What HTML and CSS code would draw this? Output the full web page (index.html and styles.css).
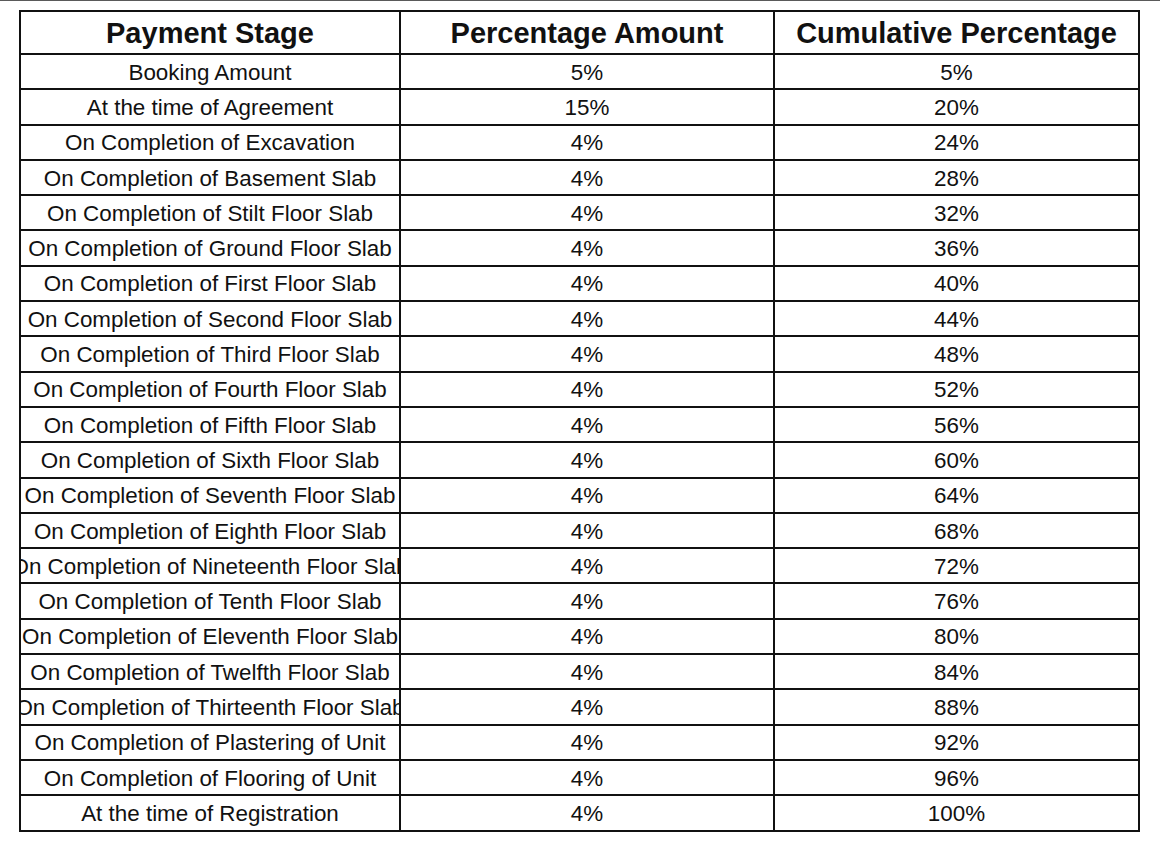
FILE: index.html
```html
<!DOCTYPE html>
<html lang="en">
<head>
<meta charset="utf-8">
<title>Payment Plan</title>
<link rel="stylesheet" href="styles.css">
</head>
<body>
<div class="topline"></div>
<table class="plan">
  <colgroup>
    <col class="c1"><col class="c2"><col class="c3">
  </colgroup>
  <thead>
    <tr><th><div class="cell">Payment Stage</div></th><th><div class="cell">Percentage Amount</div></th><th><div class="cell">Cumulative Percentage</div></th></tr>
  </thead>
  <tbody>
    <tr><td><div class="cell">Booking Amount</div></td><td><div class="cell">5%</div></td><td><div class="cell">5%</div></td></tr>
    <tr><td><div class="cell">At the time of Agreement</div></td><td><div class="cell">15%</div></td><td><div class="cell">20%</div></td></tr>
    <tr><td><div class="cell">On Completion of Excavation</div></td><td><div class="cell">4%</div></td><td><div class="cell">24%</div></td></tr>
    <tr><td><div class="cell">On Completion of Basement Slab</div></td><td><div class="cell">4%</div></td><td><div class="cell">28%</div></td></tr>
    <tr><td><div class="cell">On Completion of Stilt Floor Slab</div></td><td><div class="cell">4%</div></td><td><div class="cell">32%</div></td></tr>
    <tr><td><div class="cell">On Completion of Ground Floor Slab</div></td><td><div class="cell">4%</div></td><td><div class="cell">36%</div></td></tr>
    <tr><td><div class="cell">On Completion of First Floor Slab</div></td><td><div class="cell">4%</div></td><td><div class="cell">40%</div></td></tr>
    <tr><td><div class="cell">On Completion of Second Floor Slab</div></td><td><div class="cell">4%</div></td><td><div class="cell">44%</div></td></tr>
    <tr><td><div class="cell">On Completion of Third Floor Slab</div></td><td><div class="cell">4%</div></td><td><div class="cell">48%</div></td></tr>
    <tr><td><div class="cell">On Completion of Fourth Floor Slab</div></td><td><div class="cell">4%</div></td><td><div class="cell">52%</div></td></tr>
    <tr><td><div class="cell">On Completion of Fifth Floor Slab</div></td><td><div class="cell">4%</div></td><td><div class="cell">56%</div></td></tr>
    <tr><td><div class="cell">On Completion of Sixth Floor Slab</div></td><td><div class="cell">4%</div></td><td><div class="cell">60%</div></td></tr>
    <tr><td><div class="cell">On Completion of Seventh Floor Slab</div></td><td><div class="cell">4%</div></td><td><div class="cell">64%</div></td></tr>
    <tr><td><div class="cell">On Completion of Eighth Floor Slab</div></td><td><div class="cell">4%</div></td><td><div class="cell">68%</div></td></tr>
    <tr><td><div class="cell">On Completion of Nineteenth Floor Slab</div></td><td><div class="cell">4%</div></td><td><div class="cell">72%</div></td></tr>
    <tr><td><div class="cell">On Completion of Tenth Floor Slab</div></td><td><div class="cell">4%</div></td><td><div class="cell">76%</div></td></tr>
    <tr><td><div class="cell">On Completion of Eleventh Floor Slab</div></td><td><div class="cell">4%</div></td><td><div class="cell">80%</div></td></tr>
    <tr><td><div class="cell">On Completion of Twelfth Floor Slab</div></td><td><div class="cell">4%</div></td><td><div class="cell">84%</div></td></tr>
    <tr><td><div class="cell">On Completion of Thirteenth Floor Slab</div></td><td><div class="cell">4%</div></td><td><div class="cell">88%</div></td></tr>
    <tr><td><div class="cell">On Completion of Plastering of Unit</div></td><td><div class="cell">4%</div></td><td><div class="cell">92%</div></td></tr>
    <tr><td><div class="cell">On Completion of Flooring of Unit</div></td><td><div class="cell">4%</div></td><td><div class="cell">96%</div></td></tr>
    <tr><td><div class="cell">At the time of Registration</div></td><td><div class="cell">4%</div></td><td><div class="cell">100%</div></td></tr>
  </tbody>
</table>
</body>
</html>
```
FILE: styles.css
```css
html, body {
  margin: 0;
  padding: 0;
  background: #fff;
}
body {
  font-family: "Liberation Sans", Arial, sans-serif;
  color: #111;
}
.topline {
  height: 1px;
  background: #5a5a5a;
}
.plan {
  margin: 9px 0 0 19px;
  width: 1119px;
  table-layout: fixed;
  border-collapse: collapse;
  border: 2px solid #000;
}
.c1 { width: 380px; }
.c2 { width: 374px; }
.c3 { width: 365px; }
.plan th, .plan td {
  border: 2px solid #111;
  padding: 0;
  overflow: hidden;
}
.plan th {
  height: 41px;
  font-size: 29px;
  font-weight: bold;
}
.plan td {
  height: 33.3px;
  font-size: 22.4px;
}
.cell {
  display: flex;
  justify-content: center;
  align-items: center;
  white-space: nowrap;
  overflow: hidden;
  line-height: 1.2;
}
.plan td .cell {
  padding-top: 3px;
}
.plan th .cell {
  padding-top: 2px;
}
```
